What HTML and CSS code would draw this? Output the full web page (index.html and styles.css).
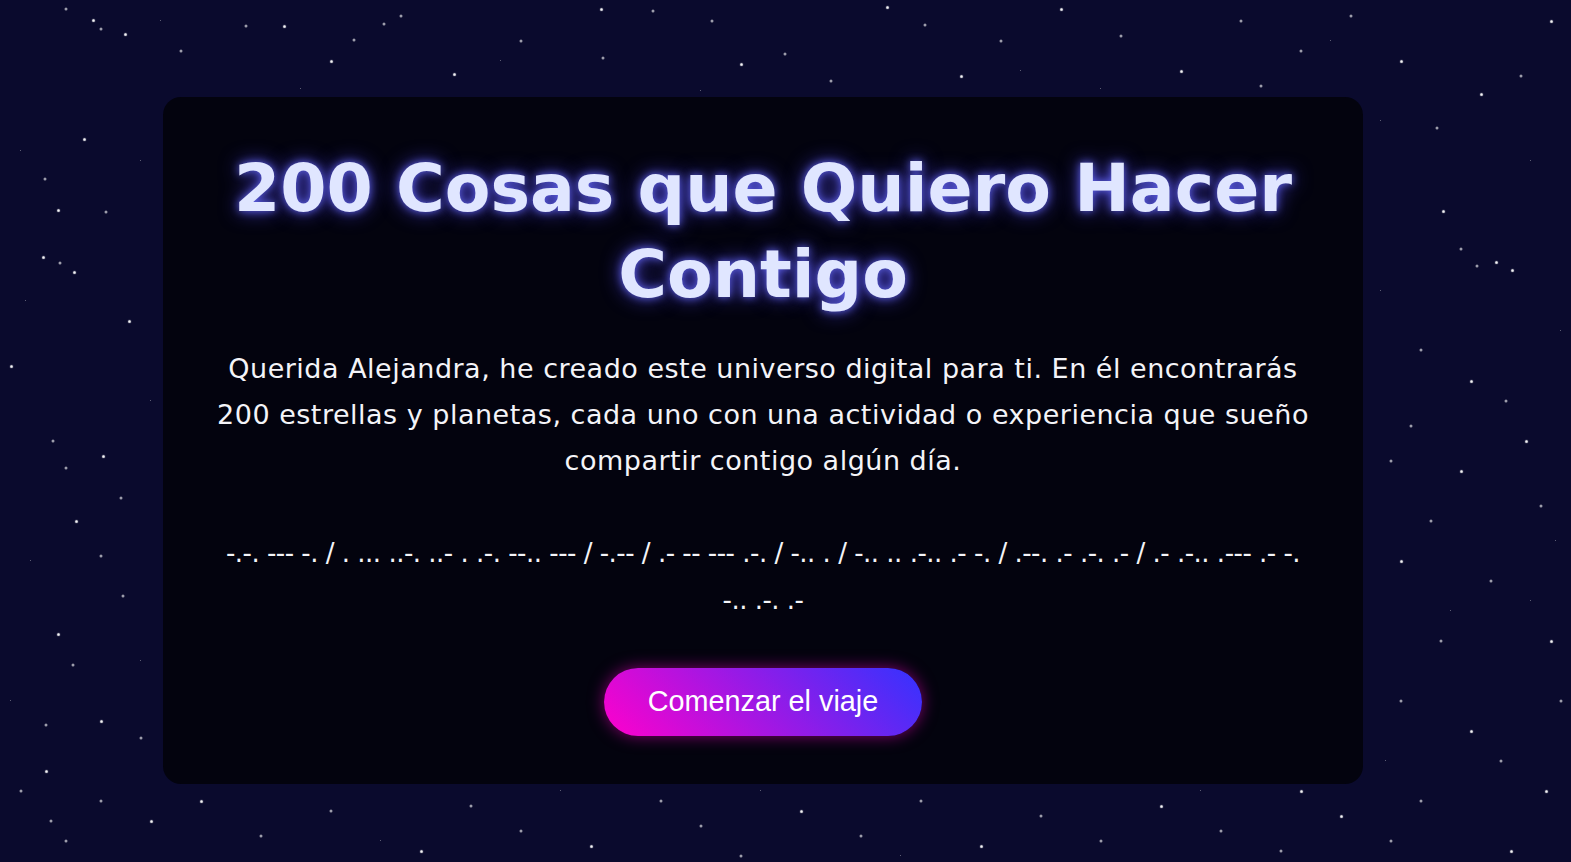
FILE: index.html
```html
<!DOCTYPE html>
<html lang="es">
<head>
<meta charset="utf-8">
<title>200 Cosas que Quiero Hacer Contigo</title>
<link rel="stylesheet" href="styles.css">
</head>
<body>
<div class="sky" aria-hidden="true">
  <span class="stars stars-bright"></span>
  <span class="stars stars-dim"></span>
  <span class="stars stars-faint"></span>
</div>
<main class="page">
  <section class="card">
    <h1 class="title">200 Cosas que Quiero Hacer Contigo</h1>
    <p class="intro">Querida Alejandra, he creado este universo digital para ti. En él encontrarás 200 estrellas y planetas, cada uno con una actividad o experiencia que sueño compartir contigo algún día.</p>
    <p class="morse">-.-. --- -. / . ... ..-. ..- . .-. --.. --- / -.-- / .- -- --- .-. / -.. . / -.. .. .-.. .- -. / .--. .- .-. .- / .- .-.. .--- .- -. -.. .-. .-</p>
    <div class="actions">
      <button class="start" type="button">Comenzar el viaje</button>
    </div>
  </section>
</main>
</body>
</html>
```

FILE: styles.css
```css
html, body {
  margin: 0;
  padding: 0;
}

body {
  position: relative;
  min-height: 100vh;
  overflow: hidden;
  background: #0a0a2d;
  color: #ffffff;
  font-family: "DejaVu Sans", "Liberation Sans", sans-serif;
}

/* starfield layer behind the content */
.sky {
  position: absolute;
  inset: 0;
  overflow: hidden;
  z-index: 0;
}

.stars {
  position: absolute;
  top: 0;
  left: 0;
  width: 2px;
  height: 2px;
  border-radius: 50%;
  background: transparent;
}

.stars-bright {
  width: 3px;
  height: 3px;
  box-shadow:
    92px 19px 1px #fff, 124px 33px 1px #fff, 283px 25px 1px #fff, 453px 73px 1px #fff,
    600px 8px 1px #fff, 740px 63px 1px #fff, 886px 6px 1px #fff, 1060px 8px 1px #fff,
    1180px 70px 1px #fff, 1400px 60px 1px #fff, 1550px 20px 1px #fff, 1480px 93px 1px #fff,
    1442px 210px 1px #fff, 1495px 261px 1px #fff, 1511px 269px 1px #fff, 1470px 380px 1px #fff,
    1525px 440px 1px #fff, 1460px 470px 1px #fff, 1400px 560px 1px #fff, 1550px 640px 1px #fff,
    1470px 730px 1px #fff, 1545px 790px 1px #fff, 1510px 850px 1px #fff, 57px 209px 1px #fff,
    83px 138px 1px #fff, 42px 256px 1px #fff, 73px 271px 1px #fff, 128px 320px 1px #fff,
    10px 365px 1px #fff, 102px 455px 1px #fff, 75px 520px 1px #fff, 57px 633px 1px #fff,
    100px 720px 1px #fff, 45px 770px 1px #fff, 150px 820px 1px #fff, 200px 800px 1px #fff,
    420px 850px 1px #fff, 590px 845px 1px #fff, 800px 810px 1px #fff, 980px 845px 1px #fff,
    1160px 805px 1px #fff, 1300px 790px 1px #fff, 1340px 815px 1px #fff, 330px 60px 1px #fff,
    960px 75px 1px #fff;
}

.stars-dim {
  opacity: 0.6;
  box-shadow:
    65px 8px 0 0.5px #fff, 100px 28px 0 0.5px #fff, 245px 25px 0 0.5px #fff, 353px 39px 0 0.5px #fff, 383px 23px 0 0.5px #fff,
    602px 57px 0 0.5px #fff, 652px 10px 0 0.5px #fff, 711px 20px 0 0.5px #fff, 784px 53px 0 0.5px #fff, 924px 24px 0 0.5px #fff,
    1000px 40px 0 0.5px #fff, 1120px 35px 0 0.5px #fff, 1240px 20px 0 0.5px #fff, 1300px 50px 0 0.5px #fff, 1350px 15px 0 0.5px #fff,
    1520px 75px 0 0.5px #fff, 180px 50px 0 0.5px #fff, 400px 15px 0 0.5px #fff, 520px 40px 0 0.5px #fff, 830px 80px 0 0.5px #fff,
    1260px 85px 0 0.5px #fff, 1436px 127px 0 0.5px #fff, 1460px 248px 0 0.5px #fff, 1476px 265px 0 0.5px #fff, 1420px 349px 0 0.5px #fff,
    1505px 400px 0 0.5px #fff, 1410px 425px 0 0.5px #fff, 1390px 460px 0 0.5px #fff, 1540px 505px 0 0.5px #fff, 1430px 520px 0 0.5px #fff,
    1490px 580px 0 0.5px #fff, 1440px 640px 0 0.5px #fff, 1400px 700px 0 0.5px #fff, 1500px 760px 0 0.5px #fff, 1420px 800px 0 0.5px #fff,
    1390px 840px 0 0.5px #fff, 1560px 700px 0 0.5px #fff, 105px 211px 0 0.5px #fff, 44px 178px 0 0.5px #fff, 59px 262px 0 0.5px #fff,
    65px 467px 0 0.5px #fff, 52px 440px 0 0.5px #fff, 120px 497px 0 0.5px #fff, 100px 555px 0 0.5px #fff, 122px 595px 0 0.5px #fff,
    72px 664px 0 0.5px #fff, 45px 724px 0 0.5px #fff, 140px 737px 0 0.5px #fff, 20px 790px 0 0.5px #fff, 100px 800px 0 0.5px #fff,
    65px 840px 0 0.5px #fff, 50px 820px 0 0.5px #fff, 260px 835px 0 0.5px #fff, 330px 810px 0 0.5px #fff, 470px 805px 0 0.5px #fff,
    520px 830px 0 0.5px #fff, 660px 800px 0 0.5px #fff, 700px 825px 0 0.5px #fff, 740px 855px 0 0.5px #fff, 860px 835px 0 0.5px #fff,
    920px 800px 0 0.5px #fff, 1040px 815px 0 0.5px #fff, 1100px 840px 0 0.5px #fff, 1220px 830px 0 0.5px #fff, 1280px 850px 0 0.5px #fff;
}

.stars-faint {
  width: 1px;
  height: 1px;
  opacity: 0.45;
  box-shadow:
    20px 150px #fff, 140px 160px #fff, 25px 300px #fff, 150px 400px #fff, 30px 560px #fff,
    140px 660px #fff, 10px 700px #fff, 1380px 120px #fff, 1530px 160px #fff, 1560px 330px #fff,
    1380px 290px #fff, 1450px 610px #fff, 1530px 600px #fff, 1385px 760px #fff, 1555px 540px #fff,
    300px 88px #fff, 700px 90px #fff, 1100px 88px #fff, 560px 790px #fff, 900px 855px #fff,
    1200px 790px #fff, 380px 840px #fff, 760px 790px #fff, 160px 20px #fff, 500px 60px #fff,
    1020px 70px #fff, 1330px 40px #fff;
}

.page {
  position: relative;
  z-index: 1;
  display: flex;
  justify-content: center;
  padding: 97px 45px 0 0;
}

.card {
  box-sizing: border-box;
  width: 1200px;
  padding: 48px;
  border-radius: 18px;
  background: rgba(2, 2, 9, 0.86);
  text-align: center;
}

.title {
  margin: 0;
  font-family: "DejaVu Sans", sans-serif;
  font-weight: 700;
  font-size: 66.5px;
  line-height: 1.3;
  color: #e0e6ff;
  text-shadow:
    0 0 8px rgba(99, 102, 241, 0.95),
    0 0 20px rgba(79, 70, 229, 0.8);
}

.intro {
  margin: 28px 0 0;
  font-size: 27px;
  line-height: 46px;
  letter-spacing: 0.5px;
  color: #f4f4f8;
}

.morse {
  margin: 46px auto 0;
  max-width: 1090px;
  font-size: 26px;
  line-height: 47px;
  letter-spacing: -0.5px;
  color: #f4f4f8;
}

.actions {
  display: flex;
  justify-content: center;
  margin-top: 44px;
}

.start {
  display: inline-flex;
  align-items: center;
  height: 68px;
  padding: 0 44px;
  border: none;
  border-radius: 34px;
  background: linear-gradient(45deg, #ff00cc, #3333ff);
  color: #ffffff;
  font-family: "Liberation Sans", Arial, sans-serif;
  font-size: 28.8px;
  cursor: pointer;
  box-shadow: 0 0 16px rgba(255, 0, 204, 0.5);
}
```
